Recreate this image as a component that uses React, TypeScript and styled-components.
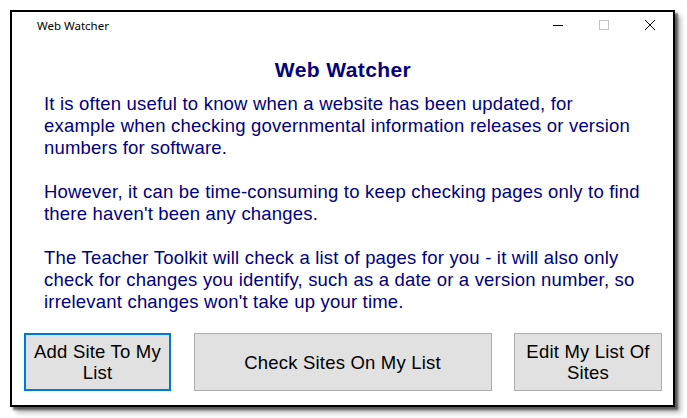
import React from "react";
import styled, { createGlobalStyle } from "styled-components";

const Global = createGlobalStyle`
  html, body { margin: 0; padding: 0; background: #ffffff; }
  body { width: 687px; height: 418px; overflow: hidden; font-family: "Liberation Sans", Arial, sans-serif; }
`;

const Stage = styled.div`
  width: 687px;
  height: 418px;
  padding: 10px 12px 10px 10px;
  box-sizing: border-box;
`;

const Window = styled.div`
  width: 665px;
  height: 397px;
  box-sizing: border-box;
  border: 2px solid #000000;
  background: #ffffff;
  box-shadow: 3px 3px 2px rgba(0,0,0,0.55), 6px 6px 5px rgba(0,0,0,0.25);
  display: flex;
  flex-direction: column;
`;

const TitleBar = styled.div`
  height: 26px;
  display: flex;
  align-items: center;
  padding-left: 25px;
`;

const TitleText = styled.div`
  flex: 1;
  font-family: "Noto Sans", "Liberation Sans", sans-serif;
  font-size: 11.5px;
  color: #000000;
`;

const Controls = styled.div`
  display: flex;
  height: 100%;
`;

const ControlButton = styled.div`
  width: 46px;
  height: 100%;
  display: flex;
  align-items: center;
  justify-content: center;
`;

const Content = styled.div`
  flex: 1;
  display: flex;
  flex-direction: column;
  padding: 0 11px 0 12px;
`;

const Heading = styled.h1`
  margin: 20px 0 0 0;
  text-align: center;
  font-family: "Liberation Sans", Arial, sans-serif;
  font-weight: bold;
  font-size: 21px;
  letter-spacing: 0.4px;
  line-height: 24px;
  color: #000080;
`;

const Body = styled.div`
  margin-top: 11px;
  padding-left: 20px;
  font-family: "Liberation Sans", Arial, sans-serif;
  font-size: 18.5px;
  letter-spacing: 0.2px;
  line-height: 22px;
  color: #000080;
`;

const Para = styled.p`
  margin: 0 0 22px 0;
  &:last-child { margin-bottom: 0; }
`;

const ButtonRow = styled.div`
  margin-top: auto;
  margin-bottom: 14px;
  display: flex;
  justify-content: space-between;
`;

const Btn = styled.button<{ $w: number; $focus?: boolean }>`
  width: ${(p) => p.$w}px;
  height: 58px;
  box-sizing: border-box;
  background: #e1e1e1;
  border: ${(p) => (p.$focus ? "2px solid #0078d7" : "1px solid #adadad")};
  font-family: "Liberation Sans", Arial, sans-serif;
  font-size: 18.5px;
  letter-spacing: 0.2px;
  line-height: 21px;
  color: #000000;
  padding: 0 6px;
  text-align: center;
  cursor: default;
`;

export default function App() {
  return (
    <>
      <Global />
      <Stage>
        <Window>
          <TitleBar>
            <TitleText>Web Watcher</TitleText>
            <Controls>
              <ControlButton>
                <svg width="10" height="10" viewBox="0 0 10 10">
                  <line x1="0" y1="5.5" x2="10" y2="5.5" stroke="#000" strokeWidth="1" />
                </svg>
              </ControlButton>
              <ControlButton>
                <svg width="10" height="10" viewBox="0 0 10 10">
                  <rect x="0.5" y="0.5" width="9" height="9" fill="none" stroke="#c4c4c4" strokeWidth="1" />
                </svg>
              </ControlButton>
              <ControlButton>
                <svg width="10" height="10" viewBox="0 0 10 10">
                  <path d="M0 0 L10 10 M10 0 L0 10" stroke="#000" strokeWidth="1" />
                </svg>
              </ControlButton>
            </Controls>
          </TitleBar>
          <Content>
            <Heading>Web Watcher</Heading>
            <Body>
              <Para>
                It is often useful to know when a website has been updated, for
                <br />
                example when checking governmental information releases or version
                <br />
                numbers for software.
              </Para>
              <Para>
                However, it can be time-consuming to keep checking pages only to find
                <br />
                there haven't been any changes.
              </Para>
              <Para>
                The Teacher Toolkit will check a list of pages for you - it will also only
                <br />
                check for changes you identify, such as a date or a version number, so
                <br />
                irrelevant changes won't take up your time.
              </Para>
            </Body>
            <ButtonRow>
              <Btn $w={147} $focus>Add Site To My List</Btn>
              <Btn $w={298}>Check Sites On My List</Btn>
              <Btn $w={148}>Edit My List Of Sites</Btn>
            </ButtonRow>
          </Content>
        </Window>
      </Stage>
    </>
  );
}
